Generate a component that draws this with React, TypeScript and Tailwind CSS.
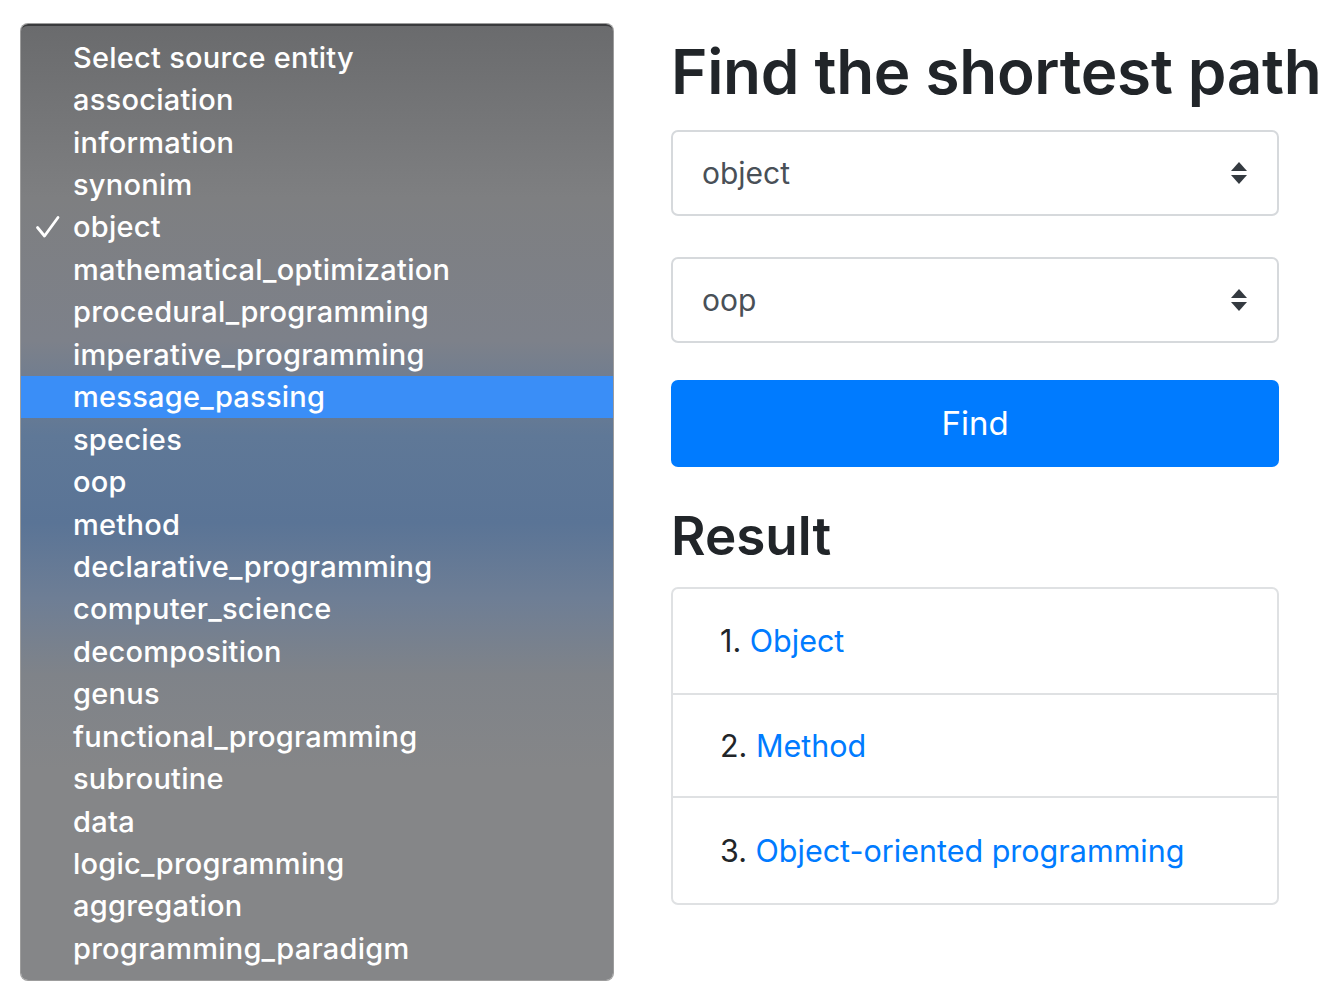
import React from "react";

const items = [
  "Select source entity",
  "association",
  "information",
  "synonim",
  "object",
  "mathematical_optimization",
  "procedural_programming",
  "imperative_programming",
  "message_passing",
  "species",
  "oop",
  "method",
  "declarative_programming",
  "computer_science",
  "decomposition",
  "genus",
  "functional_programming",
  "subroutine",
  "data",
  "logic_programming",
  "aggregation",
  "programming_paradigm",
];

function Arrows() {
  return (
    <svg width="20" height="26" viewBox="0 0 20 26" className="shrink-0">
      <path d="M10 2 L18 11 L2 11 Z" fill="#343a40" />
      <path d="M2 15 L18 15 L10 24 Z" fill="#343a40" />
    </svg>
  );
}

function Check() {
  return (
    <svg width="26" height="24" viewBox="0 0 26 24" className="shrink-0">
      <path d="M2.5 12.5 L9.5 21 L23 2.5" fill="none" stroke="#ffffff" strokeWidth="2.8" strokeLinecap="round" strokeLinejoin="round" />
    </svg>
  );
}

export default function App() {
  return (
    <div className="flex w-[1340px] h-[1000px] bg-white overflow-hidden" style={{ fontFamily: "Inter, 'Liberation Sans', sans-serif" }}>
      <div className="pl-[21px] pt-[24px] shrink-0">
        <div className="w-[592px] h-[956px] rounded-[7px] border-t-2 border-[#3a3b3d] pt-[10px] pb-[10px] bg-[linear-gradient(180deg,#6a6b6d_0%,#7e7f81_18%,#7d818a_33%,#5f7897_43%,#5a7496_52%,#6e7e95_60%,#7f8389_68%,#858688_78%,#858688_100%)] shadow-[0_0_0_1px_rgba(60,60,60,0.5)]">
          {items.map((t, i) => (
            <div
              key={t}
              className={`h-[42.45px] flex items-center text-[29px] font-medium text-white tracking-[0.25px] ${i === 8 ? "bg-[#3a8ef7]" : ""}`}
            >
              <div className="w-[52px] flex justify-end pr-[12px]">{i === 4 ? <Check /> : null}</div>
              <span className="leading-none">{t}</span>
            </div>
          ))}
        </div>
      </div>
      <div className="ml-[58px] w-[608px] shrink-0 pt-[34px]">
        <h1 className="text-[62px] leading-[76px] font-semibold text-[#212529] whitespace-nowrap tracking-[-0.3px]">Find the shortest path</h1>
        <div className="mt-[20px] h-[86px] border-2 border-[#d6d9dc] rounded-[7px] flex items-center justify-between pl-[29px] pr-[28px]">
          <span className="text-[30px] text-[#495057]">object</span>
          <Arrows />
        </div>
        <div className="mt-[41px] h-[86px] border-2 border-[#d6d9dc] rounded-[7px] flex items-center justify-between pl-[29px] pr-[28px]">
          <span className="text-[30px] text-[#495057]">oop</span>
          <Arrows />
        </div>
        <button className="mt-[37px] w-full h-[87px] rounded-[7px] bg-[#007bff] text-white text-[33px] flex items-center justify-center">Find</button>
        <h2 className="mt-[38px] text-[53px] leading-[62px] font-semibold text-[#212529]">Result</h2>
        <ol className="mt-[20px] border-2 border-[#dfe1e3] rounded-[7px]">
          <li className="h-[106px] flex items-center pl-[47px] border-b-2 border-[#dfe1e3] text-[30.5px] text-[#212529]">
            <span>1.&nbsp;</span><span className="text-[#007bff]">Object</span>
          </li>
          <li className="h-[103px] flex items-center pl-[47px] border-b-2 border-[#dfe1e3] text-[30.5px] text-[#212529]">
            <span>2.&nbsp;</span><span className="text-[#007bff]">Method</span>
          </li>
          <li className="h-[105px] flex items-center pl-[47px] text-[30.5px] text-[#212529]">
            <span>3.&nbsp;</span><span className="text-[#007bff]">Object-oriented programming</span>
          </li>
        </ol>
      </div>
    </div>
  );
}
